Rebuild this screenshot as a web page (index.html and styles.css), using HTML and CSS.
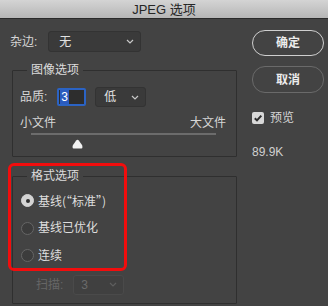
FILE: index.html
```html
<!DOCTYPE html>
<html lang="zh">
<head>
<meta charset="utf-8">
<link rel="stylesheet" href="styles.css">
</head>
<body>
<div class="window">
  <div class="titlebar">JPEG 选项</div>
  <div class="content">
    <div class="left">
      <div class="matte-row">
        <span class="label">杂边:</span>
        <div class="select matte-select"><span>无</span>
          <svg class="chev" width="8" height="5" viewBox="0 0 8 5"><path d="M1 1 L4 4 L7 1" fill="none" stroke="#c8c8c8" stroke-width="1.2"/></svg>
        </div>
      </div>
      <fieldset class="group group-image">
        <legend>图像选项</legend>
        <div class="quality-row">
          <span class="label">品质:</span>
          <div class="num-input"><span class="sel">3</span></div>
          <div class="select quality-select"><span>低</span>
            <svg class="chev" width="8" height="5" viewBox="0 0 8 5"><path d="M1 1 L4 4 L7 1" fill="none" stroke="#c8c8c8" stroke-width="1.2"/></svg>
          </div>
        </div>
        <div class="size-row"><span>小文件</span><span>大文件</span></div>
        <div class="slider">
          <div class="track"></div>
          <svg class="thumb" width="11" height="10" viewBox="0 0 11 10"><path d="M5.5 0.8 Q6.2 0.8 6.8 1.6 L10 6 Q10.4 6.6 10.4 7.4 L10.4 8.4 Q10.4 9.4 9.4 9.4 L1.6 9.4 Q0.6 9.4 0.6 8.4 L0.6 7.4 Q0.6 6.6 1 6 L4.2 1.6 Q4.8 0.8 5.5 0.8 Z" fill="#f2f2f2"/></svg>
        </div>
      </fieldset>
      <fieldset class="group group-format">
        <legend>格式选项</legend>
        <div class="radios">
          <div class="radio-row"><span class="radio on"></span><span class="cjk">基线(“标准”)</span></div>
          <div class="radio-row"><span class="radio"></span><span>基线已优化</span></div>
          <div class="radio-row"><span class="radio"></span><span>连续</span></div>
        </div>
        <div class="scan-row">
          <span class="label dim">扫描:</span>
          <div class="select scan-select"><span>3</span>
            <svg class="chev" width="8" height="5" viewBox="0 0 8 5"><path d="M1 1 L4 4 L7 1" fill="none" stroke="#5e5e5e" stroke-width="1.2"/></svg>
          </div>
        </div>
      </fieldset>
      <div class="highlight"></div>
    </div>
    <div class="right">
      <div class="btn btn-primary">确定</div>
      <div class="btn btn-cancel">取消</div>
      <div class="check-row">
        <span class="checkbox"><svg width="12" height="12" viewBox="0 0 12 12"><path d="M2.8 6.2 L5 8.4 L9.3 3.6" fill="none" stroke="#2c2c2c" stroke-width="2"/></svg></span>
        <span>预览</span>
      </div>
      <div class="filesize">89.9K</div>
    </div>
  </div>
</div>
</body>
</html>
```
FILE: styles.css
```css
html, body {
  margin: 0;
  padding: 0;
}
body {
  width: 328px;
  height: 306px;
  overflow: hidden;
  background: #434343;
  font-family: "Liberation Sans", "Noto Sans CJK SC", sans-serif;
  font-size: 12px;
  color: #d6d6d6;
}
.window {
  width: 328px;
  height: 306px;
  display: flex;
  flex-direction: column;
}
.titlebar {
  height: 19px;
  box-sizing: border-box;
  background: linear-gradient(#d4d4d4, #b6b6b6);
  border-bottom: 1px solid #2a2a2a;
  color: #262626;
  font-size: 13px;
  line-height: 19px;
  text-align: center;
}
.content {
  display: flex;
  flex: 1;
}
.left {
  position: relative;
  width: 237px;
  box-sizing: border-box;
  padding-left: 10px;
}
.label {
  line-height: 16px;
}
.cjk {
  font-family: "Noto Sans CJK SC", sans-serif;
}
.matte-row {
  display: flex;
  align-items: center;
  margin-top: 12px;
  height: 21px;
}
.select {
  display: flex;
  align-items: center;
  justify-content: space-between;
  box-sizing: border-box;
  background: #3a3a3a;
  border: 1px solid #333;
  border-radius: 3px;
  padding: 0 6px 0 10px;
  line-height: 16px;
  color: #e2e2e2;
}
.matte-select {
  margin-left: 11px;
  width: 93px;
  height: 21px;
}
.group {
  margin: 0 0 0 2px;
  padding: 0;
  width: 225px;
  box-sizing: border-box;
  border: 1px solid #2f2f2f;
  border-radius: 1px;
  min-inline-size: 0;
}
.group legend {
  margin-left: 14px;
  padding: 0 4px;
  line-height: 16px;
  color: #dcdcdc;
}
.group-image {
  margin-top: 10px;
  height: 95px;
}
.quality-row {
  display: flex;
  align-items: center;
  height: 20px;
  margin-top: 9px;
  padding-left: 7px;
}
.num-input {
  margin-left: 10px;
  width: 29px;
  height: 18px;
  box-sizing: border-box;
  border: 2px solid #2b63c4;
  border-radius: 2px;
  background: #2d2d2d;
  display: flex;
  align-items: center;
  padding-left: 1px;
}
.num-input .sel {
  background: #2a5bbf;
  color: #fff;
  line-height: 14px;
  padding: 0 1px;
}
.quality-select {
  margin-left: 9px;
  width: 51px;
  height: 20px;
  padding-left: 8px;
}
.size-row {
  display: flex;
  justify-content: space-between;
  margin-top: 8px;
  padding: 0 10px 0 7px;
  line-height: 16px;
}
.slider {
  position: relative;
  height: 16px;
}
.track {
  margin: 2px 0 0 18px;
  width: 185px;
  height: 2px;
  background: #6c6c6c;
}
.thumb {
  position: absolute;
  left: 59px;
  top: 6px;
}
.group-format {
  margin-top: 11px;
  height: 136px;
}
.radios {
  padding-top: 3px;
}
.radio-row {
  display: flex;
  align-items: center;
  height: 27.5px;
  padding-left: 8px;
  line-height: 16px;
  color: #dedede;
}
.radio {
  width: 13px;
  height: 13px;
  box-sizing: border-box;
  border: 1px solid #666;
  border-radius: 50%;
  background: #3c3c3c;
  margin-right: 4px;
  position: relative;
}
.radio.on {
  background: #d4d4d4;
  border-color: #d4d4d4;
}
.radio.on::after {
  content: "";
  position: absolute;
  left: 3.5px;
  top: 3.5px;
  width: 4px;
  height: 4px;
  border-radius: 50%;
  background: #2e2e2e;
}
.scan-row {
  display: flex;
  align-items: center;
  margin-top: 5px;
  height: 20px;
  padding-left: 23px;
}
.dim {
  color: #666;
}
.scan-select {
  margin-left: 10px;
  width: 51px;
  height: 20px;
  padding-left: 7px;
  background: #404040;
  border-color: #4a4a4a;
  color: #6a6a6a;
}
.highlight {
  position: absolute;
  left: 8px;
  top: 144px;
  width: 119px;
  height: 108px;
  box-sizing: border-box;
  border: 3px solid #f20d0d;
  border-radius: 6px;
}
.right {
  margin-left: 15px;
  width: 72px;
  display: flex;
  flex-direction: column;
}
.btn {
  height: 26px;
  box-sizing: border-box;
  border-radius: 13px;
  display: flex;
  align-items: center;
  justify-content: center;
  line-height: 16px;
  color: #ececec;
  font-weight: bold;
}
.btn-primary {
  margin-top: 11px;
  border: 1.5px solid #cfcfcf;
}
.btn-cancel {
  margin-top: 10px;
  height: 27px;
  border: 1.5px solid #6a6a6a;
}
.check-row {
  display: flex;
  align-items: center;
  margin-top: 17px;
  height: 16px;
  line-height: 16px;
}
.checkbox {
  width: 12px;
  height: 12px;
  border-radius: 2px;
  background: #d8d8d8;
  margin-right: 6px;
  display: flex;
}
.filesize {
  margin-top: 18px;
  line-height: 16px;
  color: #d0d0d0;
}
```
